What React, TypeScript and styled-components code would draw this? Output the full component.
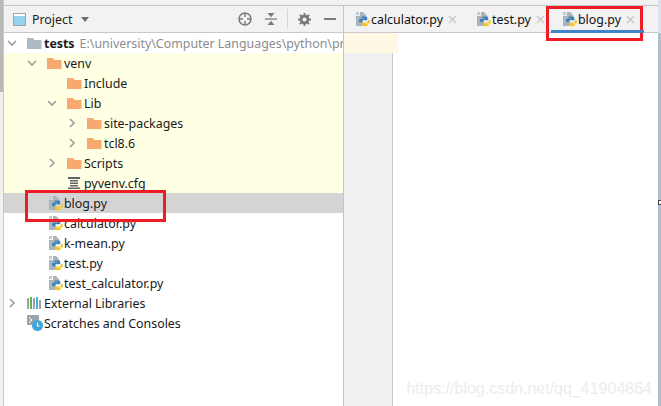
import styled, { createGlobalStyle } from 'styled-components';
import { ReactNode } from 'react';

const GlobalStyle = createGlobalStyle`
  html, body {
    margin: 0;
    padding: 0;
    background: #fff;
  }
`;

type TreeItem = {
  name: string;
  depth: number;
  kind: 'root' | 'folder' | 'py' | 'cfg' | 'libs' | 'scratch';
  arrow?: 'open' | 'closed';
  tone?: 'plain' | 'excluded' | 'selected';
  hint?: string;
};

const items: TreeItem[] = [
  { name: 'tests', depth: 0, kind: 'root', arrow: 'open', hint: 'E:\\university\\Computer Languages\\python\\project' },
  { name: 'venv', depth: 1, kind: 'folder', arrow: 'open', tone: 'excluded' },
  { name: 'Include', depth: 2, kind: 'folder', tone: 'excluded' },
  { name: 'Lib', depth: 2, kind: 'folder', arrow: 'open', tone: 'excluded' },
  { name: 'site-packages', depth: 3, kind: 'folder', arrow: 'closed', tone: 'excluded' },
  { name: 'tcl8.6', depth: 3, kind: 'folder', arrow: 'closed', tone: 'excluded' },
  { name: 'Scripts', depth: 2, kind: 'folder', arrow: 'closed', tone: 'excluded' },
  { name: 'pyvenv.cfg', depth: 2, kind: 'cfg', tone: 'excluded' },
  { name: 'blog.py', depth: 1, kind: 'py', tone: 'selected' },
  { name: 'calculator.py', depth: 1, kind: 'py' },
  { name: 'k-mean.py', depth: 1, kind: 'py' },
  { name: 'test.py', depth: 1, kind: 'py' },
  { name: 'test_calculator.py', depth: 1, kind: 'py' },
  { name: 'External Libraries', depth: 0, kind: 'libs', arrow: 'closed' },
  { name: 'Scratches and Consoles', depth: 0, kind: 'scratch' },
];

const Page = styled.div`
  position: relative;
  width: 661px;
  height: 406px;
  overflow: hidden;
  box-sizing: border-box;
  padding-top: 5px;
  display: flex;
  background: #fff;
  font-family: 'Noto Sans', 'Open Sans', sans-serif;
  font-size: 12.4px;
  color: #111;

  &::before {
    content: '';
    position: absolute;
    top: 0;
    left: 0;
    right: 0;
    height: 5px;
    background: #f2f2f2;
  }

  &::after {
    content: '';
    position: absolute;
    top: 0;
    right: 0;
    width: 3px;
    height: 33px;
    background: #dde2ea;
  }
`;

const LeftStrip = styled.div`
  width: 3px;
  flex: none;
  margin-top: -5px;
  z-index: 1;
  background: linear-gradient(#b9b9b9 0, #b9b9b9 92px, #f0f0f0 92px);
  border-right: 1px solid #c8c8c8;
`;

const ProjectPanel = styled.div`
  width: 340px;
  flex: none;
  box-sizing: border-box;
  border-top: 1px solid #c4c4c4;
  border-right: 1px solid #c4c4c4;
`;

const PanelHeader = styled.div`
  height: 26px;
  display: flex;
  align-items: center;
  background: #f2f2f2;
  border-bottom: 1px solid #c9c9c9;
  padding-left: 9px;
`;

const HeaderTitle = styled.span`
  margin-left: 6px;
  color: #222;
`;

const Caret = styled.span`
  width: 0;
  height: 0;
  margin-left: 9px;
  border-left: 4px solid transparent;
  border-right: 4px solid transparent;
  border-top: 5px solid #6e6e6e;
`;

const HeaderTools = styled.div`
  margin-left: auto;
  display: flex;
  align-items: center;
  padding-right: 7px;
`;

const ToolDivider = styled.span`
  width: 1px;
  height: 20px;
  background: #d4d4d4;
  margin: 0 10px;
`;

const ToolIcon = styled.svg<{ $gap?: number }>`
  display: block;
  flex: none;
  margin-left: ${(p) => p.$gap ?? 0}px;
`;

const Tree = styled.div`
  display: flex;
  flex-direction: column;
`;

const Row = styled.div<{ $tone: string; $depth: number }>`
  height: 20px;
  display: flex;
  align-items: center;
  white-space: nowrap;
  overflow: hidden;
  box-sizing: border-box;
  padding-left: ${(p) => 3 + p.$depth * 20}px;
  background: ${(p) =>
    p.$tone === 'excluded' ? '#ffffe4' : p.$tone === 'selected' ? '#d4d4d4' : '#fff'};
`;

const ArrowSlot = styled.span`
  width: 20px;
  flex: none;
  display: flex;
  align-items: center;
`;

const IconSlot = styled.span<{ $inset: number }>`
  width: 17px;
  flex: none;
  display: flex;
  align-items: center;
  padding-left: ${(p) => p.$inset}px;
  box-sizing: border-box;
`;

const RowName = styled.span<{ $bold?: boolean }>`
  font-weight: ${(p) => (p.$bold ? 700 : 400)};
  color: #1a1a1a;
`;

const RowHint = styled.span`
  margin-left: 5px;
  color: #8c8c8c;
`;

const EditorArea = styled.div`
  flex: 1;
  min-width: 0;
  display: flex;
  flex-direction: column;
  border-top: 1px solid #c4c4c4;
`;

const TabBar = styled.div`
  height: 26px;
  flex: none;
  display: flex;
  background: #f2f2f2;
  border-bottom: 1px solid #c9c9c9;
`;

const Tab = styled.div<{ $active?: boolean; $width: number }>`
  position: relative;
  width: ${(p) => p.$width}px;
  flex: none;
  box-sizing: border-box;
  display: flex;
  align-items: center;
  padding-left: 11px;

  ${(p) =>
    p.$active &&
    `
    &::after {
      content: '';
      position: absolute;
      left: 0;
      right: 0;
      bottom: -1px;
      height: 3px;
      background: #4083c9;
      z-index: 3;
    }
  `}
`;

const TabName = styled.span`
  color: #111;
`;

const TabClose = styled.svg`
  margin-left: 5px;
  flex: none;
`;

const EditorBody = styled.div`
  flex: 1;
  display: flex;
  position: relative;
`;

const Gutter = styled.div`
  width: 48px;
  flex: none;
  background: #f0f0f0;
  border-right: 1px solid #c8c8c8;
`;

const CaretLine = styled.div`
  position: absolute;
  top: 0;
  left: 0;
  width: 54px;
  height: 20px;
  background: #fef8e4;
`;

const RightEdge = styled.div`
  position: absolute;
  top: 0;
  right: 0;
  bottom: 0;
  width: 3px;
  background: #b3bed0;
`;

const EdgeMark = styled.div`
  position: absolute;
  top: 167px;
  right: 0;
  width: 3px;
  height: 5px;
  box-sizing: border-box;
  background: #fff;
  border: 1px solid #444;
  border-right: none;
`;

const Watermark = styled.div`
  position: absolute;
  right: 9px;
  bottom: 8px;
  font-family: 'Liberation Sans', sans-serif;
  font-size: 16px;
  line-height: 18px;
  color: #ececec;
`;

const Callout = styled.div<{ $x: number; $y: number; $w: number; $h: number }>`
  position: absolute;
  left: ${(p) => p.$x}px;
  top: ${(p) => p.$y}px;
  width: ${(p) => p.$w}px;
  height: ${(p) => p.$h}px;
  box-sizing: border-box;
  border: 3px solid #ee1c25;
  z-index: 2;
`;

const Glyph = styled.svg`
  display: block;
  flex: none;
`;

function PythonIcon() {
  return (
    <Glyph width="16" height="16" viewBox="0 0 16 16">
      <path d="M1 5h4V1h3l3 3v2H8v9H1z" fill="#aab4bc" />
      <path d="M1 1h3v3H1z" fill="#c4ccd2" />
      <path d="M7.500 5.500h3.200c.9 0 1.500.6 1.500 1.400v2.400H8c-.7 0-1.100.4-1.100 1.100v.9H5.400c-.9 0-1.400-.8-1.400-1.800 0-1 .5-1.700 1.400-1.700h3.400v-.5H6.400v-.4c0-.8.4-1.400 1.100-1.400z" fill="#3c82b8" />
      <path d="M12.800 9h1c.8 0 1.200.8 1.200 1.700 0 1-.4 1.800-1.200 1.800h-3.400v.5h2.400v.8c0 .8-.6 1.400-1.500 1.400H8.600c-.8 0-1.400-.6-1.400-1.300v-2.400H11.600c.7 0 1.200-.4 1.200-1.100z" fill="#f5c52c" />
    </Glyph>
  );
}

function FolderIcon({ color }: { color: string }) {
  return (
    <Glyph width="15" height="11" viewBox="0 0 15 11">
      <path d="M0 0h6l1.500 2H14.500v9H0z" fill={color} />
    </Glyph>
  );
}

function CfgIcon() {
  return (
    <Glyph width="14" height="12" viewBox="0 0 14 12">
      <path d="M1 0h12v2H1zM3 3h8v1.500H3zM3 5.500h8V7H3zM3 8h8v1.500H3zM1 10.500h12V12H1z" fill="#5f6468" />
    </Glyph>
  );
}

function LibsIcon() {
  return (
    <Glyph width="15" height="12" viewBox="0 0 15 12">
      <rect x="0" y="1" width="2" height="11" fill="#9aa5ab" />
      <rect x="3" y="0" width="2" height="12" fill="#62b543" />
      <rect x="6" y="1" width="2" height="11" fill="#9aa5ab" />
      <rect x="9" y="0" width="2" height="12" fill="#40b6e0" />
      <rect x="12" y="3" width="2" height="9" fill="#9aa5ab" />
    </Glyph>
  );
}

function ScratchIcon() {
  return (
    <Glyph width="16" height="16" viewBox="0 0 16 16">
      <rect x="0" y="0" width="12" height="10" fill="#9aa5ab" />
      <path d="M2 2.500 5 5l-3 2.500" fill="none" stroke="#fff" strokeWidth="1" />
      <circle cx="10.500" cy="10.500" r="5.500" fill="#40a5db" />
      <path d="M10.500 7.500v3.500h2" fill="none" stroke="#fff" strokeWidth="1.200" />
    </Glyph>
  );
}

function Chevron({ open }: { open: boolean }) {
  return (
    <Glyph width="10" height="10" viewBox="0 0 10 10">
      <path
        d={open ? 'M1 3l4 4 4-4' : 'M3 1l4 4-4 4'}
        fill="none"
        stroke="#a0a0a0"
        strokeWidth="1.700"
      />
    </Glyph>
  );
}

function itemIcon(item: TreeItem): ReactNode {
  switch (item.kind) {
    case 'root':
      return <FolderIcon color="#aebac3" />;
    case 'folder':
      return <FolderIcon color="#f8a970" />;
    case 'py':
      return <PythonIcon />;
    case 'cfg':
      return <CfgIcon />;
    case 'libs':
      return <LibsIcon />;
    default:
      return <ScratchIcon />;
  }
}

function CloseMark() {
  return (
    <TabClose width="9" height="9" viewBox="0 0 9 9">
      <path d="M1 1l7 7M8 1L1 8" stroke="#c3c3c3" strokeWidth="1.100" fill="none" />
    </TabClose>
  );
}

export default function App() {
  return (
    <Page>
      <GlobalStyle />
      <LeftStrip />
      <ProjectPanel>
        <PanelHeader>
          <Glyph width="13" height="13" viewBox="0 0 13 13">
            <rect x="0.500" y="0.500" width="12" height="12" fill="#fff" stroke="#9aa5ab" />
            <rect x="1" y="3" width="11" height="9" fill="#94d3ee" />
          </Glyph>
          <HeaderTitle>Project</HeaderTitle>
          <Caret />
          <HeaderTools>
            <ToolIcon width="14" height="14" viewBox="0 0 14 14">
              <circle cx="7" cy="7" r="6" fill="none" stroke="#7a7a7a" strokeWidth="1.500" />
              <path d="M7 1v4M7 9v4M1 7h4M9 7h4" stroke="#7a7a7a" strokeWidth="1.500" />
            </ToolIcon>
            <ToolIcon $gap={13} width="12" height="14" viewBox="0 0 12 14">
              <path d="M0 7h12" stroke="#7a7a7a" strokeWidth="1.300" />
              <path d="M2.500 1h7L6 5.300zM2.500 13h7L6 8.700z" fill="#7a7a7a" />
            </ToolIcon>
            <ToolDivider />
            <ToolIcon width="13" height="13" viewBox="0 0 14 14">
              <circle cx="7" cy="7" r="3.700" fill="none" stroke="#7a7a7a" strokeWidth="3" />
              <path d="M7 0v3M7 11v3M0 7h3M11 7h3M2 2l2 2M10 10l2 2M12 2l-2 2M4 10l-2 2" stroke="#7a7a7a" strokeWidth="2" />
            </ToolIcon>
            <ToolIcon $gap={13} width="12" height="2" viewBox="0 0 12 2">
              <rect width="12" height="2" fill="#7a7a7a" />
            </ToolIcon>
          </HeaderTools>
        </PanelHeader>
        <Tree>
          {items.map((item) => (
            <Row key={item.name} $depth={item.depth} $tone={item.tone ?? 'plain'}>
              <ArrowSlot>{item.arrow && <Chevron open={item.arrow === 'open'} />}</ArrowSlot>
              <IconSlot $inset={item.kind === 'py' ? 1 : 0}>{itemIcon(item)}</IconSlot>
              <RowName $bold={item.kind === 'root'}>{item.name}</RowName>
              {item.hint && <RowHint>{item.hint}</RowHint>}
            </Row>
          ))}
        </Tree>
      </ProjectPanel>
      <EditorArea>
        <TabBar>
          <Tab $width={121}>
            <PythonIcon />
            <TabName>calculator.py</TabName>
            <CloseMark />
          </Tab>
          <Tab $width={86}>
            <PythonIcon />
            <TabName>test.py</TabName>
            <CloseMark />
          </Tab>
          <Tab $width={93} $active>
            <PythonIcon />
            <TabName>blog.py</TabName>
            <CloseMark />
          </Tab>
        </TabBar>
        <EditorBody>
          <Gutter />
          <CaretLine />
          <RightEdge />
          <EdgeMark />
          <Watermark>https://blog.csdn.net/qq_41904864</Watermark>
        </EditorBody>
      </EditorArea>
      <Callout $x={25} $y={190} $w={141} $h={32} />
      <Callout $x={546} $y={6} $w={97} $h={35} />
    </Page>
  );
}
